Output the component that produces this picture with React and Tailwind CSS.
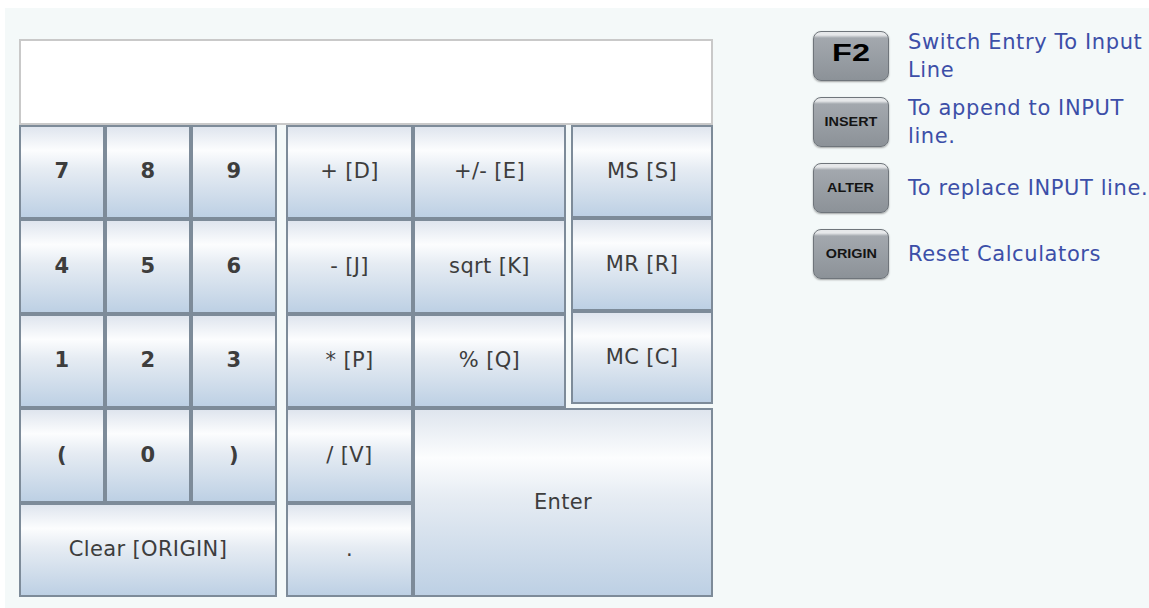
import React from "react";

const keyBtn =
  "flex items-center justify-center border-2 border-[#7d8b99] bg-[linear-gradient(to_bottom,#dfe5ee_0%,#fcfdfe_26%,#e6ecf3_47%,#bdd0e4_100%)] text-[#3d3d3d] text-[21px] tracking-[0.35px] select-none";

function Key({ label, bold, className = "" }) {
  return (
    <div className={`${keyBtn} ${bold ? "font-bold" : ""} ${className}`}>
      {label}
    </div>
  );
}

function HaasKey({ label, big }) {
  return (
    <div className="flex h-[50px] w-[76px] shrink-0 items-center justify-center rounded-[8px] border border-[#6f757b] bg-[linear-gradient(to_bottom,#e6e8ea_0px,#e6e8ea_3px,#a3a8ae_6px,#8c9298_100%)] shadow-[0_1px_2px_rgba(0,0,0,0.35)]">
      {big ? (
        <span className="scale-x-[1.35] pb-[6px] font-['Liberation_Sans',sans-serif] text-[24px] font-bold leading-none text-black">
          {label}
        </span>
      ) : (
        <span className="scale-x-[1.2] font-['Liberation_Sans',sans-serif] text-[12px] font-black leading-none text-[#141414]">
          {label}
        </span>
      )}
    </div>
  );
}

function HelpRow({ keyLabel, big, text }) {
  return (
    <div className="flex h-[50px] items-center gap-[19px]">
      <HaasKey label={keyLabel} big={big} />
      <p className="w-[255px] shrink-0 text-[21px] leading-[28px] tracking-[0.6px] text-[#3c4fa8]">
        {text}
      </p>
    </div>
  );
}

export default function App() {
  return (
    <div className="h-[608px] w-[1149px] overflow-hidden bg-white pl-[5px] pt-[8px] font-['DejaVu_Sans',sans-serif]">
      <div className="flex h-full items-start bg-[#f4f9f9] pl-[14px]">
        {/* calculator */}
        <div className="mt-[31px] w-[694px]">
          <div className="h-[86px] border-2 border-[#c9c9c9] bg-white" />
          <div className="flex gap-[9px]">
            {/* digits */}
            <div className="grid h-[472px] w-[258px] grid-cols-3 grid-rows-5">
              {["7", "8", "9", "4", "5", "6", "1", "2", "3", "(", "0", ")"].map((d) => (
                <Key key={d} label={d} bold />
              ))}
              <Key label="Clear [ORIGIN]" className="col-span-3" />
            </div>
            {/* operators */}
            <div className="flex w-[427px]">
              <div className="grid h-[472px] w-[127px] grid-rows-5">
                <Key label="+ [D]" />
                <Key label="- [J]" />
                <Key label="* [P]" />
                <Key label="/ [V]" />
                <Key label="." />
              </div>
              <div className="flex w-[300px] flex-col">
                <div className="flex h-[283px] gap-[5px]">
                  <div className="grid w-[153px] grid-rows-3">
                    <Key label="+/- [E]" />
                    <Key label="sqrt [K]" />
                    <Key label="% [Q]" />
                  </div>
                  <div className="grid h-[279px] w-[142px] grid-rows-3">
                    <Key label="MS [S]" />
                    <Key label="MR [R]" />
                    <Key label="MC [C]" />
                  </div>
                </div>
                <Key label="Enter" className="h-[189px]" />
              </div>
            </div>
          </div>
        </div>

        {/* help */}
        <div className="ml-[100px] mt-[23px] flex flex-col gap-4">
          <HelpRow keyLabel="F2" big text="Switch Entry To Input Line" />
          <HelpRow keyLabel="INSERT" text="To append to INPUT line." />
          <HelpRow keyLabel="ALTER" text="To replace INPUT line." />
          <HelpRow keyLabel="ORIGIN" text="Reset Calculators" />
        </div>
      </div>
    </div>
  );
}
